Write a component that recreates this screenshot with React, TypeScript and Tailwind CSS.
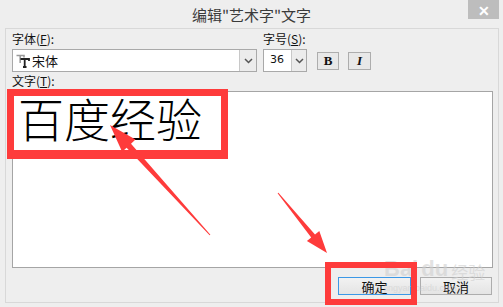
import React from "react";

const CJK = { fontFamily: '"Noto Sans CJK SC", "Noto Sans", sans-serif' };

function Chevron() {
  return (
    <svg width="9" height="6" viewBox="0 0 9 6">
      <path d="M1 1 L4.5 4.5 L8 1" fill="none" stroke="#555" strokeWidth="1.5" />
    </svg>
  );
}

function TTIcon() {
  return (
    <svg width="15" height="14" viewBox="0 0 15 14" className="mr-[1px]">
      <path d="M0.5 1.5 H8 V3.5 M4.2 1.5 V9" fill="none" stroke="#9a9a9a" strokeWidth="1.6" />
      <path d="M4.5 5 H13 V7 M8.7 5 V13 M7 13 H10.5" fill="none" stroke="#222" strokeWidth="1.8" />
    </svg>
  );
}

export default function App() {
  return (
    <div
      className="relative w-[503px] h-[307px] overflow-hidden bg-[#eeeeee] text-[#111]"
      style={CJK}
    >
      {/* Title bar */}
      <div className="relative h-[28px] flex items-center justify-center">
        <span className="text-[15px] leading-none text-[#3a3a3a] pt-[1px]">编辑"艺术字"文字</span>
        <div className="absolute right-[4px] top-0 w-[31px] h-[19px] bg-[#bdbdbd] flex items-center justify-center text-white text-[14px] font-bold leading-none">
          ✕
        </div>
      </div>

      {/* Content panel */}
      <div className="ml-[5px] w-[494px] h-[275px] border border-[#d8d8d8] pl-[6px] pr-[5px] pt-[2px] flex flex-col">
        <div className="flex gap-[6px]">
          <div className="w-[245px] flex flex-col">
            <div className="text-[12px] leading-[16px]">
              字体(<span className="underline">F</span>):
            </div>
            <div className="mt-[2px] h-[23px] flex border border-[#a9a9a9] bg-white">
              <div className="flex-1 flex items-center pl-[3px]">
                <TTIcon />
                <span className="text-[13px] leading-none">宋体</span>
              </div>
              <div className="w-[17px] border-l border-[#c8c8c8] bg-[#ececec] flex items-center justify-center">
                <Chevron />
              </div>
            </div>
          </div>
          <div className="flex flex-col">
            <div className="text-[12px] leading-[16px]">
              字号(<span className="underline">S</span>):
            </div>
            <div className="mt-[2px] flex items-center">
              <div className="w-[44px] h-[23px] flex border border-[#a9a9a9] bg-white">
                <div className="flex-1 flex items-center pl-[6px] text-[11px]" style={{ fontFamily: '"DejaVu Sans", sans-serif' }}>
                  36
                </div>
                <div className="w-[15px] border-l border-[#c8c8c8] bg-[#ececec] flex items-center justify-center">
                  <Chevron />
                </div>
              </div>
              <div className="ml-[10px] w-[22px] h-[18px] border border-[#adadad] bg-[#e8e8e8] flex items-center justify-center text-[13px] font-bold" style={{ fontFamily: '"Liberation Serif", serif' }}>
                B
              </div>
              <div className="ml-[9px] w-[23px] h-[18px] border border-[#adadad] bg-[#e8e8e8] flex items-center justify-center text-[13px] font-bold italic" style={{ fontFamily: '"Liberation Serif", serif' }}>
                I
              </div>
            </div>
          </div>
        </div>

        <div className="mt-[1px] text-[12px] leading-[16px]">
          文字(<span className="underline">T</span>):
        </div>
        <div className="mt-[2px] w-[481px] h-[177px] border border-[#a5a5a5] bg-white pl-[5px] pt-[2px]">
          <div className="text-[46px] leading-none text-black font-light">百度经验</div>
        </div>

        <div className="mt-[9px] mr-[1px] flex justify-end gap-[9px]">
          <div className="w-[73px] h-[18px] border border-[#3c98e6] bg-gradient-to-b from-[#f2f2f2] to-[#e4e4e4] flex items-center justify-center text-[13px] leading-none">
            确定
          </div>
          <div className="w-[72px] h-[18px] border border-[#adadad] bg-gradient-to-b from-[#f2f2f2] to-[#e4e4e4] flex items-center justify-center text-[13px] leading-none">
            取消
          </div>
        </div>
      </div>

      {/* Watermark */}
      <div className="absolute left-[384px] top-[258px] text-[#d0d0d0] opacity-60 pointer-events-none">
        <div className="flex items-end gap-[3px] leading-none">
          <span className="text-[22px] font-bold" style={{ fontFamily: '"Liberation Sans", sans-serif' }}>Bai</span>
          <span className="text-[22px] font-bold" style={{ fontFamily: '"Liberation Sans", sans-serif' }}>du</span>
          <span className="text-[17px]">经验</span>
        </div>
        <div className="text-[9px] leading-none mt-[4px]" style={{ fontFamily: '"Liberation Sans", sans-serif' }}>
          jingyan.baidu.com
        </div>
      </div>

      {/* Red annotation boxes */}
      <div className="absolute left-[7px] top-[89px] w-[221px] h-[70px] border-[7px] border-b-[9px] border-[#fe3b3b]" />
      <div className="absolute left-[325px] top-[262px] w-[92px] h-[43px] border-[6px] border-[#fe3b3b]" />

      {/* Arrows */}
      <svg className="absolute left-0 top-0 pointer-events-none" width="503" height="307" viewBox="0 0 503 307">
        <polygon
          fill="#fe3b3b"
          points="210.4,234.7 131.0,143.7 135.5,139.6 110,125 122.1,151.8 126.6,147.7 209.6,235.3"
        />
        <polygon
          fill="#fe3b3b"
          points="278.4,192.7 315.0,234.4 319.3,230.9 327,253 306.9,241.1 311.2,237.6 277.6,193.3"
        />
      </svg>
    </div>
  );
}
